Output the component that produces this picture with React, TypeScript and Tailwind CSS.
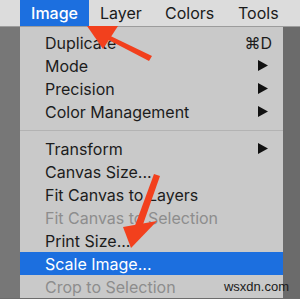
const items: { label: string; right?: 'arrow' | string; disabled?: boolean; active?: boolean; sep?: boolean }[] = [
  { label: 'Duplicate', right: '⌘D' },
  { label: 'Mode', right: 'arrow' },
  { label: 'Precision', right: 'arrow' },
  { label: 'Color Management', right: 'arrow' },
  { label: '', sep: true },
  { label: 'Transform', right: 'arrow' },
  { label: 'Canvas Size...' },
  { label: 'Fit Canvas to Layers' },
  { label: 'Fit Canvas to Selection', disabled: true },
  { label: 'Print Size...' },
  { label: 'Scale Image...', active: true },
  { label: 'Crop to Selection', disabled: true },
];

function Triangle({ white }: { white?: boolean }) {
  return (
    <svg width="10" height="11" viewBox="0 0 10 11">
      <polygon points="0,0 10,5.5 0,11" fill={white ? '#fff' : '#111'} />
    </svg>
  );
}

export default function App() {
  return (
    <div className="relative h-[299px] w-[300px] overflow-hidden bg-[#6c6c6c] font-['Inter',sans-serif] text-[16px]">
      {/* menu bar */}
      <div className="flex h-[26px] items-center bg-[#dcdcdc] pl-[20px] text-[#1a1a1a]">
        <div className="flex h-full w-[69px] items-center justify-center bg-[#1c6fdf] font-medium text-white">Image</div>
        <div className="w-[64px] pl-[11px]">Layer</div>
        <div className="w-[73px] pl-[12px]">Colors</div>
        <div className="pl-[12px]">Tools</div>
      </div>
      <div className="h-px bg-[#9c9c9c]" />

      <div className="flex">
        <div className="w-[20px] bg-[#777777]" />
        <div className="w-[263px] bg-[#c9c9c9] pt-[4px]">
          {items.map((it, i) =>
            it.sep ? (
              <div key={i} className="flex h-[14px] items-center">
                <div className="h-px w-full bg-[#b3b3b3]" />
              </div>
            ) : (
              <div
                key={i}
                className={`flex h-[23px] items-center justify-between pl-[25px] pr-[15px] ${
                  it.active ? 'bg-[#1c6fdf] text-white' : it.disabled ? 'text-[#8d8d8d]' : 'text-[#1c1c1c]'
                }`}
              >
                <span>{it.label}</span>
                {it.right === 'arrow' ? <Triangle white={it.active} /> : it.right ? <span className="-mr-[4px]">{it.right}</span> : null}
              </div>
            )
          )}
        </div>
        <div className="flex-1 bg-[#6b6b6b]" />
      </div>

      {/* annotation arrows */}
      <svg className="pointer-events-none absolute left-0 top-0" width="300" height="299" viewBox="0 0 300 299">
        <polygon points="98,30 101,36 149,61 152,56" fill="#f2401d" />
        <polygon points="87,26 118,26 103,49" fill="#f2401d" />
        <polygon points="154,174 160,176 140,233 133,231" fill="#f2401d" />
        <polygon points="131,248 123,227 157,221" fill="#f2401d" />
      </svg>

      <div className="absolute bottom-[3px] right-[11px] text-[13px] font-['Liberation_Sans',sans-serif] text-[#1a1a1a]">wsxdn.com</div>
    </div>
  );
}
